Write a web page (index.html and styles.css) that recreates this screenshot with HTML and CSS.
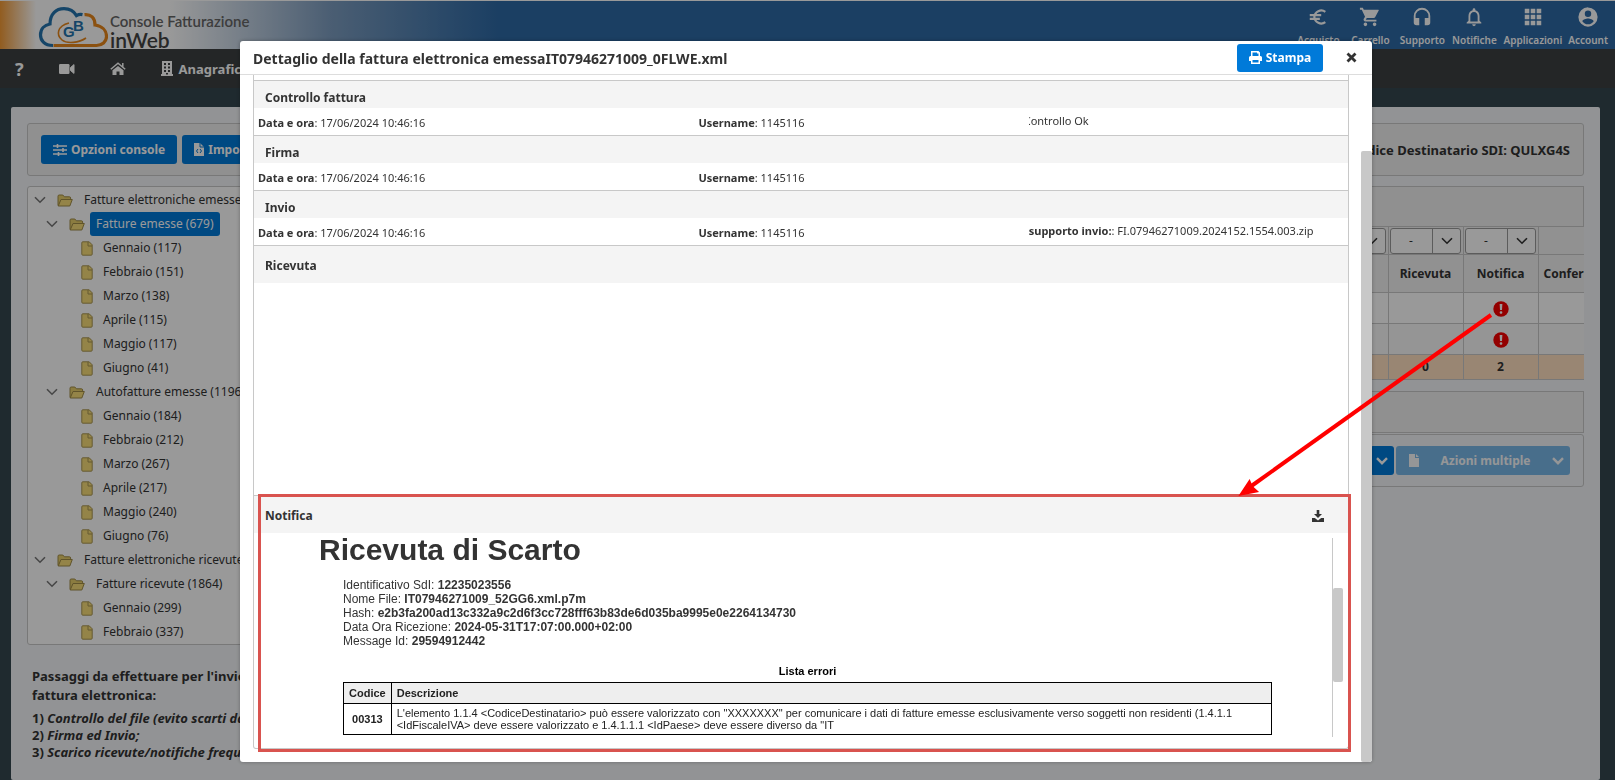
FILE: index.html
```
<!DOCTYPE html>
<html lang="it">
<head>
<meta charset="utf-8">
<title>Console Fatturazione inWeb</title>
<link rel="stylesheet" href="styles.css">
</head>
<body>
<svg class="defs" aria-hidden="true">
  <symbol id="chevron" viewBox="0 0 12 8"><path d="M1 1.200l5 5 5-5" fill="none" stroke="currentColor" stroke-width="1.600"/></symbol>
  <symbol id="chevron-bold" viewBox="0 0 12 8"><path d="M1 1.200l5 5 5-5" fill="none" stroke="currentColor" stroke-width="2.400"/></symbol>
  <symbol id="folder" viewBox="0 0 16 13">
    <path d="M1 11.500V2.200Q1 1 2.200 1h3.600l1.600 1.800h5q1.200 0 1.200 1.200v1.500" fill="#e8cf6c" stroke="#a08c48"/>
    <path d="M1.200 12 4 5.500h11.300L12.800 12z" fill="#f7dd78" stroke="#a08c48" stroke-linejoin="round"/>
  </symbol>
  <symbol id="file" viewBox="0 0 12 15">
    <path d="M1.800.800h6.400l3 3v9.400q0 1-1 1H1.800q-1 0-1-1V1.800q0-1 1-1z" fill="#f7dd78" stroke="#a89654"/>
    <path d="M7 1v4h4" fill="none" stroke="#a89654"/>
  </symbol>
  <symbol id="alert" viewBox="0 0 16 16"><circle cx="8" cy="8" r="7.700" fill="#f50000"/><path d="M6.600 3h2.800l-.4 6H7z" fill="#fff"/><rect x="6.700" y="10.200" width="2.600" height="2.600" rx="1" fill="#fff"/></symbol>
</svg>

<div class="page">
  <header class="topbar">
    <div class="brand">
      <svg class="brand-cloud" viewBox="0 0 70 42" aria-hidden="true">
        <g fill="none" stroke-width="3.200">
          <path d="M15 39.500C6 39.500 2.500 34 2.500 29c0-6 4-10 9.500-11C12 8 18 2.600 26 2.600c6 0 10 2.600 12.500 7 2-1.200 4-1.400 6-1" stroke="#2474ae"/>
          <path d="M46.500 8.600C53 8 57 12 57 19c7 1 11.500 5.500 11.500 11.500 0 5.500-4.500 9-10 9H15.500" stroke="#e8871c"/>
          <path d="M31 17c-12 3-13 12-7 17 5 4 17 3 24-2" stroke="#e8871c" stroke-width="1.600"/>
        </g>
        <text x="25" y="31" class="brand-g">G</text>
        <text x="35" y="25" class="brand-b">B</text>
      </svg>
      <div class="brand-text"><span class="brand-top">Console Fatturazione</span><span class="brand-name">inWeb</span></div>
    </div>
    <nav class="quick">
      <a href="#"><svg viewBox="0 0 24 24"><path d="M20 6.300A7.600 7.600 0 0 0 8 12a7.600 7.600 0 0 0 12 5.700M3 10h12.500M3 14h11" fill="none" stroke="currentColor" stroke-width="2.400"/></svg>Acquisto</a>
      <a href="#"><svg viewBox="0 0 24 24" fill="currentColor"><path d="M7 18a2 2 0 1 0 0 4 2 2 0 0 0 0-4zM1 2v2h2l3.600 7.600-1.400 2.400C4.500 15.400 5.500 17 7 17h12v-2H7.400l1.100-2h7.500c.7 0 1.400-.4 1.700-1L21.500 5c.3-.5 0-1-.8-1H5.200l-1-2zm16 16a2 2 0 1 0 0 4 2 2 0 0 0 0-4z"/></svg>Carrello</a>
      <a href="#"><svg viewBox="0 0 24 24" fill="currentColor"><path d="M12 2a9 9 0 0 0-9 9v7a3 3 0 0 0 3 3h3v-8H5v-2a7 7 0 0 1 14 0v2h-4v8h3a3 3 0 0 0 3-3v-7a9 9 0 0 0-9-9z"/></svg>Supporto</a>
      <a href="#"><svg viewBox="0 0 24 24" fill="currentColor"><path d="M12 22a2 2 0 0 0 2-2h-4a2 2 0 0 0 2 2zm6-6v-5c0-3.100-1.600-5.600-4.500-6.300V4a1.500 1.500 0 0 0-3 0v.7C7.600 5.400 6 7.900 6 11v5l-2 2v1h16v-1zm-2 1H8v-6c0-2.500 1.500-4.500 4-4.500s4 2 4 4.500z"/></svg>Notifiche</a>
      <a href="#"><svg viewBox="0 0 24 24" fill="currentColor"><path d="M3 3h5v5H3zM9.500 3h5v5h-5zM16 3h5v5h-5zM3 9.500h5v5H3zM9.500 9.500h5v5h-5zM16 9.500h5v5h-5zM3 16h5v5H3zM9.500 16h5v5h-5zM16 16h5v5h-5z"/></svg>Applicazioni</a>
      <a href="#" class="account"><svg viewBox="0 0 24 24" fill="currentColor"><path fill-rule="evenodd" d="M12 1.500a10.500 10.500 0 1 0 0 21 10.500 10.500 0 0 0 0-21zM12 5a3.500 3.500 0 1 1 0 7 3.500 3.500 0 0 1 0-7zm0 15a7.500 7.500 0 0 1-6.200-3.400C6 14.600 10 13.500 12 13.500s6 1.100 6.200 3.100A7.500 7.500 0 0 1 12 20z"/></svg>Account</a>
    </nav>
  </header>

  <nav class="menu">
    <a href="#" aria-label="Guida" class="menu-help">?</a>
    <a href="#" aria-label="Video"><svg width="16" height="12" viewBox="0 0 16 12" fill="currentColor"><rect y="1" width="10.500" height="10" rx="1.200"/><path d="M11.500 4.500 15 1.600V10.400L11.500 7.500z" stroke="currentColor"/></svg></a>
    <a href="#" aria-label="Home"><svg width="16" height="14" viewBox="0 0 16 14" fill="currentColor"><path d="M8 3.900 2.500 8.300V13h4V9.500h3V13h4V8.300z"/><path d="M.8 7.300 8 1.200l7.200 6.100M12.800 1v4" fill="none" stroke="currentColor" stroke-width="1.500"/></svg></a>
    <a href="#"><svg width="12" height="15" viewBox="0 0 12 15" fill="currentColor"><path fill-rule="evenodd" d="M1 0h10v13h1v2H0v-2h1zm2 2v2h2V2zm4 0v2h2V2zM3 5.500v2h2v-2zm4 0v2h2v-2zM3 9v2h2V9zm4 0v2h2V9zm-2 3v1.500h2V12z"/></svg>Anagrafiche</a>
  </nav>

  <main class="panel">
    <div class="toolbar box">
      <button class="btn"><svg width="14" height="12" viewBox="0 0 14 12" fill="none" stroke="currentColor" stroke-width="1.600"><path d="M0 2h14M0 6h14M0 10h14M4.500 0v4M10 4v4M5.500 8v4"/></svg>Opzioni console</button>
      <button class="btn"><svg width="10" height="13" viewBox="0 0 10 13"><path d="M0 0h6l4 4v9H0z" fill="currentColor"/><path d="M4 6 2.500 8 4 10M6 6l1.500 2L6 10M6 0v4h4" fill="none" stroke="#007ad9"/></svg>Importa</button>
      <strong class="sdi">Codice Destinatario SDI: QULXG4S</strong>
    </div>

    <div class="columns">
      <aside class="side">
        <ul class="tree box">
          <li><svg class="chev"><use href="#chevron"/></svg><svg class="fold"><use href="#folder"/></svg><span>Fatture elettroniche emesse</span></li>
          <li class="l2"><svg class="chev"><use href="#chevron"/></svg><svg class="fold"><use href="#folder"/></svg><span class="selected">Fatture emesse (679)</span></li>
          <li class="l3"><svg class="doc"><use href="#file"/></svg><span>Gennaio (117)</span></li>
          <li class="l3"><svg class="doc"><use href="#file"/></svg><span>Febbraio (151)</span></li>
          <li class="l3"><svg class="doc"><use href="#file"/></svg><span>Marzo (138)</span></li>
          <li class="l3"><svg class="doc"><use href="#file"/></svg><span>Aprile (115)</span></li>
          <li class="l3"><svg class="doc"><use href="#file"/></svg><span>Maggio (117)</span></li>
          <li class="l3"><svg class="doc"><use href="#file"/></svg><span>Giugno (41)</span></li>
          <li class="l2"><svg class="chev"><use href="#chevron"/></svg><svg class="fold"><use href="#folder"/></svg><span>Autofatture emesse (1196)</span></li>
          <li class="l3"><svg class="doc"><use href="#file"/></svg><span>Gennaio (184)</span></li>
          <li class="l3"><svg class="doc"><use href="#file"/></svg><span>Febbraio (212)</span></li>
          <li class="l3"><svg class="doc"><use href="#file"/></svg><span>Marzo (267)</span></li>
          <li class="l3"><svg class="doc"><use href="#file"/></svg><span>Aprile (217)</span></li>
          <li class="l3"><svg class="doc"><use href="#file"/></svg><span>Maggio (240)</span></li>
          <li class="l3"><svg class="doc"><use href="#file"/></svg><span>Giugno (76)</span></li>
          <li><svg class="chev"><use href="#chevron"/></svg><svg class="fold"><use href="#folder"/></svg><span>Fatture elettroniche ricevute</span></li>
          <li class="l2"><svg class="chev"><use href="#chevron"/></svg><svg class="fold"><use href="#folder"/></svg><span>Fatture ricevute (1864)</span></li>
          <li class="l3"><svg class="doc"><use href="#file"/></svg><span>Gennaio (299)</span></li>
          <li class="l3"><svg class="doc"><use href="#file"/></svg><span>Febbraio (337)</span></li>
        </ul>
        <div class="steps">
          <h2>Passaggi da effettuare per l'invio<br>fattura elettronica:</h2>
          <p>1) <em>Controllo del file (evito scarti da</em><br>2) <em>Firma ed Invio;</em><br>3) <em>Scarico ricevute/notifiche frequ</em></p>
        </div>
      </aside>

      <section class="list">
        <div class="list-head"></div>
        <table class="grid">
          <colgroup><col><col class="c"><col class="c"><col class="c"><col class="last"></colgroup>
          <thead>
            <tr class="filters">
              <td></td>
              <td><div class="pick"><select aria-label="Filtro invio"><option>-</option></select><svg><use href="#chevron"/></svg></div></td>
              <td><div class="pick"><select aria-label="Filtro ricevuta"><option>-</option></select><svg><use href="#chevron"/></svg></div></td>
              <td><div class="pick"><select aria-label="Filtro notifica"><option>-</option></select><svg><use href="#chevron"/></svg></div></td>
              <td></td>
            </tr>
            <tr class="heads"><th></th><th></th><th>Ricevuta</th><th>Notifica</th><th class="cut">Conferma</th></tr>
          </thead>
          <tbody>
            <tr><td></td><td></td><td></td><td><svg class="alert"><use href="#alert"/></svg></td><td></td></tr>
            <tr class="odd"><td></td><td></td><td></td><td><svg class="alert"><use href="#alert"/></svg></td><td></td></tr>
          </tbody>
          <tfoot><tr><td></td><td></td><td>0</td><td>2</td><td></td></tr></tfoot>
        </table>
        <div class="pager"></div>
        <div class="actions box">
          <button class="btn split" aria-label="Altre azioni"><svg class="caret"><use href="#chevron-bold"/></svg></button>
          <button class="btn multi" disabled><svg width="10" height="13" viewBox="0 0 10 13" fill="currentColor"><path d="M0 0h6v4h4v9H0zM7 0l3 3H7z"/></svg><span>Azioni multiple</span><svg class="caret"><use href="#chevron-bold"/></svg></button>
        </div>
      </section>
    </div>
  </main>
</div>

<div class="overlay">
  <section class="modal" role="dialog" aria-labelledby="dlg-title">
    <header class="modal-head">
      <h1 id="dlg-title">Dettaglio della fattura elettronica emessaIT07946271009_0FLWE.xml</h1>
      <button class="btn print"><svg width="13" height="13" viewBox="0 0 13 13" fill="currentColor"><path fill-rule="evenodd" d="M2 0h7.500L11 1.500V5h.5Q13 5 13 6.500V10h-2v3H2v-3H0V6.500Q0 5 1.500 5H2zm1.500 1.500V5h6V2.500H8v-1zm0 7.500v2.500h6V9z"/></svg>Stampa</button>
      <button class="close" aria-label="Chiudi"><svg width="11" height="11" viewBox="0 0 11 11"><path d="M1.500 1.500l8 8M9.500 1.500l-8 8" stroke="currentColor" stroke-width="2.800"/></svg></button>
    </header>
    <div class="modal-body">
      <div class="sections">
        <section class="sec">
          <h2>Controllo fattura</h2>
          <div class="row"><p><b>Data e ora</b>: 17/06/2024 10:46:16</p><p><b>Username</b>: 1145116</p><p class="note"><span class="trim">Controllo Ok</span></p></div>
        </section>
        <section class="sec">
          <h2>Firma</h2>
          <div class="row"><p><b>Data e ora</b>: 17/06/2024 10:46:16</p><p><b>Username</b>: 1145116</p></div>
        </section>
        <section class="sec">
          <h2>Invio</h2>
          <div class="row"><p><b>Data e ora</b>: 17/06/2024 10:46:16</p><p><b>Username</b>: 1145116</p><p class="note"><b>supporto invio:</b>: FI.07946271009.2024152.1554.003.zip</p></div>
        </section>
        <section class="sec tall">
          <h2>Ricevuta</h2>
          <div class="empty"></div>
        </section>
        <section class="sec tall notice">
          <h2>Notifica <button class="download" aria-label="Scarica"><svg width="12" height="12" viewBox="0 0 12 12" fill="currentColor"><path d="M4.700 0h2.600v4h2.700L6 8 2 4h2.700z"/><path d="M0 8h2.800L6 10.500 9.200 8H12v4H0z"/></svg></button></h2>
          <div class="viewer">
            <div class="receipt">
              <h3>Ricevuta di Scarto</h3>
              <ul class="facts">
                <li>Identificativo SdI: <b>12235023556</b></li>
                <li>Nome File: <b>IT07946271009_52GG6.xml.p7m</b></li>
                <li>Hash: <b>e2b3fa200ad13c332a9c2d6f3cc728fff63b83de6d035ba9995e0e2264134730</b></li>
                <li>Data Ora Ricezione: <b>2024-05-31T17:07:00.000+02:00</b></li>
                <li>Message Id: <b>29594912442</b></li>
              </ul>
              <table class="errors">
                <caption>Lista errori</caption>
                <thead><tr><th>Codice</th><th>Descrizione</th></tr></thead>
                <tbody><tr><th>00313</th><td>L'elemento 1.1.4 &lt;CodiceDestinatario&gt; può essere valorizzato con "XXXXXXX" per comunicare i dati di fatture emesse esclusivamente verso soggetti non residenti (1.4.1.1 &lt;IdFiscaleIVA&gt; deve essere valorizzato e 1.4.1.1.1 &lt;IdPaese&gt; deve essere diverso da "IT</td></tr></tbody>
              </table>
            </div>
            <div class="track"><div class="thumb"></div></div>
          </div>
          <div class="highlight"></div>
        </section>
      </div>
      <div class="scrollbar"></div>
    </div>
  </section>
  <svg class="arrow" aria-hidden="true">
    <path d="M1491 315 1250 487" stroke="#f00" stroke-width="4"/>
    <path d="M1240 495 1249.500 480.500 1252 486.500 1257.500 491.500z" fill="#f00" stroke="#f00" stroke-width="1.500"/>
  </svg>
</div>
</body>
</html>
```
FILE: styles.css
```
* { box-sizing: border-box; }
body { margin: 0; height: 100vh; overflow: hidden; background: #34464f; color: #333; font: 12px/18px "Noto Sans", "Open Sans", sans-serif; }
h1, h2, h3, p, ul { margin: 0; padding: 0; }
ul { list-style: none; }
button { font: inherit; color: inherit; border: 0; background: none; padding: 0; }
a { color: #fff; text-decoration: none; }
.defs { position: absolute; width: 0; height: 0; }
.page { min-height: 100vh; display: flex; flex-direction: column; }

.topbar { height: 49px; display: flex; justify-content: space-between; padding: 0 7px 0 38px; border-top: 1px solid #fff; background: linear-gradient(90deg, #f39a35 0, #fff 36px, #fff 170px, #7d9dc0 330px, #2d69a5 500px); }
.brand { display: flex; }
.brand-cloud { width: 70px; height: 42px; margin-top: 5px; }
.brand-g, .brand-b { font: bold 15px "Liberation Sans", sans-serif; fill: #2474ae; }
.brand-text { display: flex; flex-direction: column; margin: 12px 0 0 2px; font-family: Lato, sans-serif; font-weight: 600; }
.brand-top { font-size: 15px; line-height: 16px; color: #666; }
.brand-name { font-size: 21px; line-height: 21px; color: #444; }
.quick { display: flex; gap: 6px; padding-top: 5px; }
.quick a { display: flex; flex-direction: column; align-items: center; min-width: 46px; font-size: 10px; font-weight: 600; line-height: 16px; gap: 4px; }
.quick .account { min-width: 38px; }
.quick svg { width: 22px; height: 22px; }

.menu { height: 39px; padding: 0 15px; display: flex; align-items: center; gap: 35px; background: #3c4042; color: #fff; font-weight: bold; font-size: 13px; }
.menu a { display: flex; align-items: center; gap: 6px; }
.menu-help { font-size: 18px; }

.panel { flex: 1; margin: 19px 15px 0 11px; padding: 16px; background: #f4f6f9; border-radius: 2px; }
.box { border: 1px solid #c8c8c8; border-radius: 3px; }
.toolbar { height: 53px; display: flex; align-items: center; gap: 5px; padding: 0 13px; background: #f0f0f0; }
.btn { display: flex; align-items: center; gap: 4px; height: 29px; padding: 0 12px; border-radius: 3px; background: #007ad9; color: #fff; font-weight: bold; font-size: 12px; white-space: nowrap; }
.sdi { margin-left: auto; font-size: 13px; }
.columns { display: grid; grid-template-columns: 300px minmax(0, 1fr); gap: 16px; margin-top: 10px; }

.tree { background: #fff; height: 459px; padding-top: 1px; overflow: hidden; }
.tree li { display: flex; align-items: center; height: 24px; padding-left: 6px; white-space: nowrap; }
.tree li.l2 { padding-left: 18px; }
.tree li.l3 { padding-left: 53px; }
.tree span { padding: 2px 6px; border-radius: 3px; line-height: 20px; }
.tree .selected { background: #007ad9; color: #fff; }
.chev { width: 12px; height: 8px; color: #777; }
.fold { width: 16px; height: 13px; margin: 0 5px 0 11px; }
.doc { width: 12px; height: 15px; margin-right: 4px; }
.steps { padding: 22px 0 0 5px; white-space: nowrap; }
.steps h2 { font-size: 13px; line-height: 19px; }
.steps p { margin-top: 5px; font-size: 13px; line-height: 17px; font-weight: bold; }

.list-head { height: 40px; border: 1px solid #c8c8c8; border-bottom: 0; background: #f0f0f0; }
.grid { width: 100%; table-layout: fixed; border-collapse: collapse; background: #fff; font-size: 12px; }
.grid .c { width: 75px; }
.grid .last { width: 46px; }
.grid th, .grid td { border: 1px solid #c8c8c8; border-right-width: 0; padding: 0; text-align: center; vertical-align: middle; }
.filters, .heads { background: #f2f2f2; }
.filters { height: 28px; }
.heads { height: 38px; }
.grid tbody tr { height: 31px; }
.grid tbody .odd { background: #f9f9f9; }
.grid tfoot tr { height: 25px; background: #ffdfc0; font-weight: bold; }
.grid .cut { text-align: left; padding-left: 5px; overflow: hidden; }
.alert { width: 16px; height: 16px; vertical-align: middle; }
.pick { position: relative; width: 71px; height: 26px; margin: 0 auto; }
.pick select { width: 100%; height: 100%; padding: 0 0 0 18px; appearance: none; border: 1px solid #999; border-radius: 3px; background: linear-gradient(#999, #999) right 27px top / 1px 100% no-repeat #fff; font: inherit; color: #333; }
.pick svg { position: absolute; right: 8px; top: 9px; width: 12px; height: 8px; }
.pager { height: 42px; margin-top: 11px; border: 1px solid #c8c8c8; background: #f0f0f0; }
.actions { height: 53px; margin-top: 1px; display: flex; justify-content: flex-end; align-items: center; gap: 2px; padding: 0 13px; }
.split { padding: 0 6px; }
.multi { width: 174px; justify-content: space-between; padding: 0 6px 0 13px; opacity: .5; }
.caret { width: 12px; height: 8px; }

.overlay { position: fixed; inset: 0; background: rgba(0, 0, 0, .4); padding: 41px 243px 18px 240px; display: flex; }
.modal { flex: 1; display: flex; flex-direction: column; background: #fff; border-radius: 3px; box-shadow: 0 0 4px rgba(0, 0, 0, .3); overflow: hidden; }
.modal-head { height: 34px; display: flex; align-items: center; padding: 0 15px 0 13px; border-bottom: 1px solid #ddd; }
.modal-head h1 { flex: 1; padding-top: 3px; font-size: 14px; line-height: 20px; }
.print { height: 28px; width: 86px; justify-content: center; padding: 0; margin-right: 23px; }
.close { display: flex; }
.modal-body { flex: 1; display: flex; justify-content: space-between; padding-left: 13px; }
.sections { flex: 1; margin-right: 12px; padding-top: 5px; border: 1px solid #c8c8c8; border-top: 0; border-radius: 0 0 3px 3px; align-self: flex-start; }
.scrollbar { width: 11px; margin-top: 76px; background: #c8c8c8; border-radius: 2px; }
.sec { border-top: 1px solid #c8c8c8; }
.sec h2 { display: flex; justify-content: space-between; align-items: center; height: 27px; padding: 6px 24px 0 11px; background: #f4f4f4; font-size: 12px; line-height: 16px; }
.tall h2 { height: 37px; padding-top: 2px; }
.row { display: grid; grid-template-columns: 40fr 30fr 29fr; height: 27px; padding: 2px 0 0 4px; align-items: center; font-size: 11px; line-height: 16px; white-space: nowrap; }
.note { padding-bottom: 4px; }
.trim { display: block; overflow: hidden; text-indent: -5px; }
.empty { height: 212px; }
.notice { position: relative; }
.download { display: flex; }
.highlight { position: absolute; inset: -2px -3px -4px 4px; border: 3px solid #d9534f; pointer-events: none; }
.viewer { display: flex; height: 215px; padding: 5px 5px 11px 65px; }
.receipt { flex: 1; min-width: 0; font: 12px/14px "Liberation Sans", Arial, sans-serif; }
.receipt h3 { font-size: 30px; line-height: 23px; }
.facts { padding: 17px 0 0 24px; }
.errors { width: calc(100% - 84px); margin: 17px 0 0 24px; border-collapse: collapse; font-size: 11px; line-height: 12px; color: #222; }
.errors caption { font-weight: bold; color: #000; padding-bottom: 5px; }
.errors th, .errors td { border: 1px solid #000; padding: 3px 5px; text-align: left; }
.errors thead th { background: #eee; padding: 4px 5px; }
.errors th { white-space: nowrap; text-align: center; }
.errors thead th:last-child { text-align: left; }
.track { width: 11px; border-left: 1px solid #c8c8c8; padding-top: 50px; }
.thumb { height: 94px; background: #c8c8c8; border-radius: 2px; }
.arrow { position: absolute; left: 0; top: 0; width: 100%; height: 100%; pointer-events: none; }
```
